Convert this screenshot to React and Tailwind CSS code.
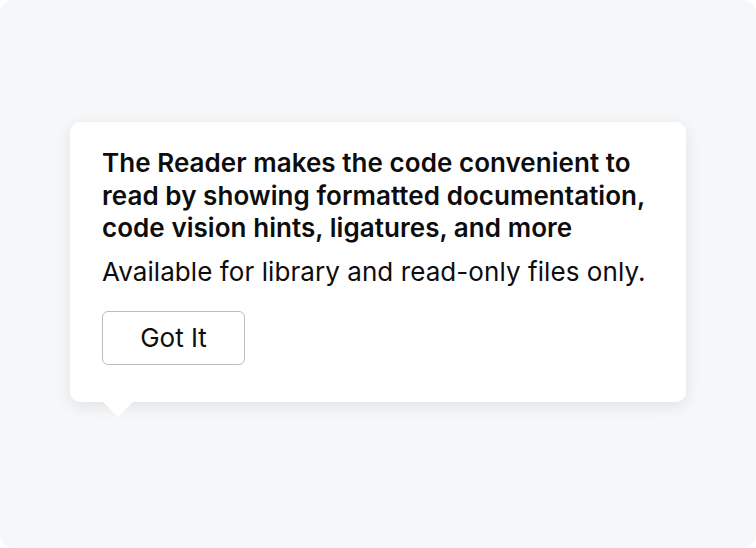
export default function App() {
  return (
    <div className="w-[756px] h-[548px] bg-white" style={{ fontFamily: 'Inter, "Noto Sans", sans-serif' }}>
      <div className="w-full h-full bg-[#f6f7f9] rounded-[14px] pt-[122px] pl-[70px]">
        {/* Popup card */}
        <div className="relative w-[616px] bg-white rounded-[10px] shadow-[0_4px_16px_rgba(0,0,0,0.09)] pl-[32px] pr-[20px] pt-[25px] pb-[37px]">
          <p className="max-w-[560px] text-[26px] leading-[32.5px] font-semibold text-[#0d0d0d] tracking-[0.05px]">
            The Reader makes the code convenient to read by showing formatted documentation, code vision hints, ligatures, and more
          </p>
          <p className="mt-[11px] text-[26px] leading-[32px] text-[#0d0d0d] tracking-[0.07px]">
            Available for library and read-only files only.
          </p>
          <button className="mt-[23px] w-[143px] h-[54px] border-[1.5px] border-[#bdbdbd] rounded-[6px] text-[26px] text-[#0d0d0d] bg-white">
            Got It
          </button>
          {/* pointer */}
          <div className="absolute left-[33px] -bottom-[15px] w-0 h-0 border-l-[15px] border-r-[15px] border-t-[15px] border-l-transparent border-r-transparent border-t-white" />
        </div>
      </div>
    </div>
  );
}
